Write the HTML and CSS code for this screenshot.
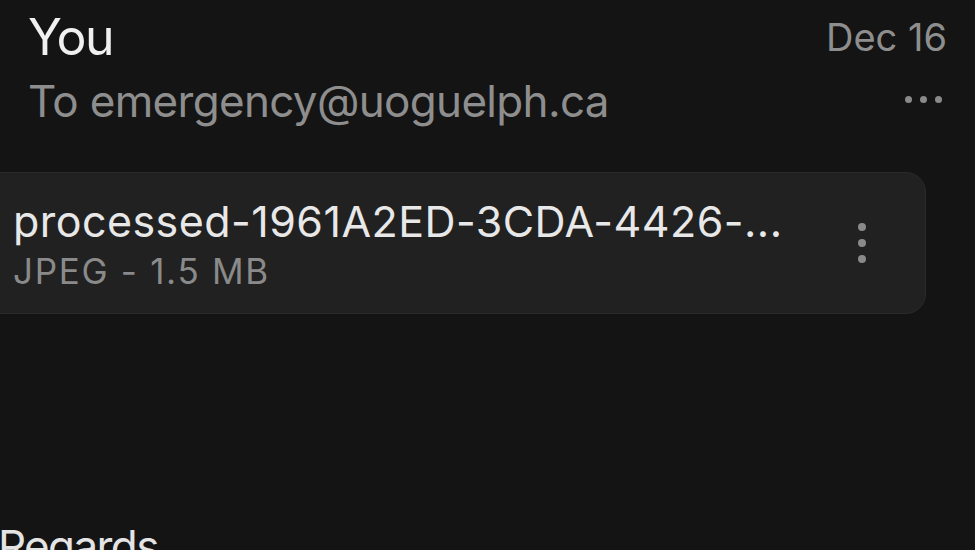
FILE: index.html
```html
<!DOCTYPE html>
<html lang="en">
<head>
    <meta charset="UTF-8">
    <title>Message</title>
    <link rel="stylesheet" href="styles.css">
</head>
<body>
<div class="mail">
    <div class="head">
        <div class="who">
            <div class="sender">You</div>
            <div class="to">To emergency@uoguelph.ca</div>
        </div>
        <div class="meta">
            <div class="date">Dec 16</div>
            <div class="more-h"><span></span><span></span><span></span></div>
        </div>
    </div>
    <div class="attach">
        <div class="file">
            <div class="file-name">processed-1961A2ED-3CDA-4426-...</div>
            <div class="file-size">JPEG - 1.5 MB</div>
        </div>
        <div class="more-v"><span></span><span></span><span></span></div>
    </div>
    <div class="body-text">Regards</div>
</div>
</body>
</html>
```

FILE: styles.css
```css
*{
    margin:0;padding:0;
    box-sizing: border-box;
}
html,body{
    background:#141414;
    height:100%;
    overflow:hidden;
}
.mail{
    font-family: Inter, "Noto Sans", sans-serif;
    color:#ececec;
}
.head{
    display:flex;
    justify-content: space-between;
    padding:7px 28px 0 28px;
}
.sender{
    font-size:50px;
    line-height:60px;
    letter-spacing:-1.5px;
    color:#f0f0f0;
}
.to{
    font-size:44px;
    line-height:56px;
    letter-spacing:-0.68px;
    margin-top:6px;
    color:#8e8e8e;
}
.meta{
    display:flex;
    flex-direction: column;
    align-items: flex-end;
    padding-top:6px;
}
.date{
    font-size:38px;
    line-height:48px;
    color:#8e8e8e;
}
.more-h{
    display:flex;
    gap:8px;
    margin-top:35px;
    padding-right:5px;
}
.more-h span,
.more-v span{
    width:7px;
    height:7px;
    border-radius:50%;
    background:#8a8a8a;
}
.attach{
    display:flex;
    align-items:center;
    justify-content: space-between;
    margin:43px 49px 0 -20px;
    height:142px;
    padding:0 59px 0 32px;
    background:#212121;
    border:1px solid #2a2a2a;
    border-radius:20px;
}
.file-name{
    font-size:43px;
    line-height:52px;
    letter-spacing:0.45px;
    color:#e8e8e8;
}
.file-size{
    font-size:35px;
    line-height:40px;
    letter-spacing:1.7px;
    margin-top:4px;
    color:#8a8a8a;
}
.more-v{
    display:flex;
    flex-direction: column;
    gap:8px;
}
.more-v span{
    width:8px;
    height:8px;
}
.body-text{
    font-size:44px;
    line-height:56px;
    letter-spacing:-1.6px;
    margin:204px 0 0 -2px;
    color:#e4e4e4;
}
```
